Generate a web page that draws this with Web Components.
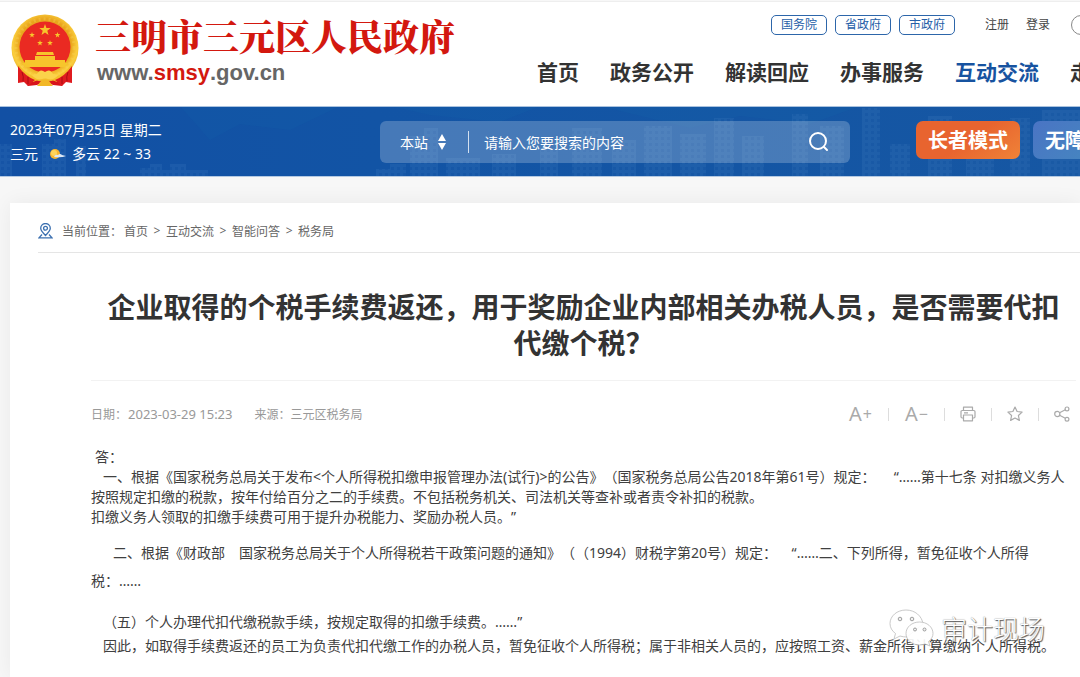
<!DOCTYPE html>
<html lang="zh-CN">
<head>
<meta charset="utf-8">
<meta name="viewport" content="width=device-width, initial-scale=1">
<title>三明市三元区人民政府 - 智能问答</title>
<style>
  body { margin: 0; background: #f7f7f7; color: #333; font-family: "Noto Sans", "Noto Sans CJK SC", sans-serif; font-size: 14px; text-spacing-trim: space-all; overflow-x: hidden; }
</style>
</head>
<body>
<gov-header></gov-header>
<gov-banner></gov-banner>
<content-card>
  <crumb-trail slot="trail"></crumb-trail>
  <qa-article>
    <span slot="title">企业取得的个税手续费返还，用于奖励企业内部相关办税人员，是否需要代扣代缴个税？</span>
    <span slot="date">2023-03-29 15:23</span>
    <span slot="source">三元区税务局</span>
  </qa-article>
</content-card>

<script>
function define(tag, html) {
  const template = document.createElement('template');
  template.innerHTML = html;
  customElements.define(tag, class extends HTMLElement {
    constructor() {
      super();
      this.attachShadow({ mode: 'open' }).append(template.content.cloneNode(true));
    }
  });
}

define('state-emblem', `
<style>:host{display:block;width:70px;height:76px} svg{display:block}</style>
<svg width="70" height="76" viewBox="0 0 70 76" role="img" aria-label="国徽">
  <defs>
    <radialGradient id="g" cx=".5" cy=".45" r=".55"><stop offset=".7" stop-color="#e9a51c"/><stop offset=".88" stop-color="#fbcf3e"/><stop offset="1" stop-color="#eab02a"/></radialGradient>
    <path id="s" d="M0-6 1.4-1.9H5.7L2.3.8 3.5 4.9 0 2.4-3.5 4.9-2.3.8-5.7-1.9H-1.4Z"/>
  </defs>
  <path d="M11 50 8 68l7-1 3 6 9-1 8-4 8 4 9 1 3-6 7 1-3-18Z" fill="#d8121b"/>
  <ellipse cx="35" cy="35" rx="33.5" ry="33.5" fill="url(#g)"/>
  <circle cx="35" cy="35" r="29" fill="none" stroke="#f9dc62" stroke-width="3" stroke-dasharray="2 3" opacity=".3"/>
  <circle cx="35" cy="34" r="25.5" fill="#ea2a22"/>
  <g fill="#f7c52c"><use href="#s" transform="translate(35 17)"/>
    <use href="#s" transform="translate(22 22) scale(.5)"/><use href="#s" transform="translate(47.5 22) scale(.5)"/>
    <use href="#s" transform="translate(30 30) scale(.5)"/><use href="#s" transform="translate(40 30) scale(.5)"/>
    <path d="M27 39h16l1 3H26ZM25 43h20v4h10v3H15v-3h10ZM12 50h46l-3 4H15Z"/></g>
  <path d="M9 52q10 14 26 14t26-14l1 5q-9 9-15 12l-7-3-5 3-5-3-7 3Q17 66 8 57Z" fill="#f5bd2b"/>
  <path d="M8 53q7 10 17 14l-7 6-4-4-6 1ZM62 53q-7 10-17 14l7 6 4-4 6 1Z" fill="#df1b1f"/>
  <path d="M12 59q2 5 1 9M18 64v7M58 59q-2 5-1 9M52 64v7" stroke="#a90c12" fill="none"/>
  <path d="M27 61q3-6 8-2 5-4 8 2l5 1q-5 7-13 3-8 4-13-3Z" fill="#fbd34a"/>
  <path d="M31 68q4-3 8 0l4 5H27Z" fill="#f2b827"/>
</svg>`);

define('gov-header', `
<style>
  :host{display:block;background:#fff;border-top:1px solid #eee;margin-top:1px}
  header{display:flex;height:104px;overflow:hidden}
  .brand{display:flex;flex:none;width:517px;padding:11px 10px 0;gap:15px;color:inherit;text-decoration:none}
  .name{display:block;margin-top:2px;font:900 36px/42px "Noto Serif CJK SC","Noto Sans CJK SC",serif;color:#d3180f;white-space:nowrap}
  .url{display:block;margin-top:4px;padding-left:2px;font:bold 22px/24px "Liberation Sans",sans-serif;color:#666}
  .url b{color:#d3180f}
  .side{flex:1;min-width:0}
  .top{display:flex;justify-content:flex-end;align-items:center;gap:8px;padding-top:13px;margin-right:-11px;font-size:12px;line-height:18px}
  .top a{text-decoration:none;color:#444;white-space:nowrap}
  .top .pill{border:1px solid #2d66aa;border-radius:5px;padding:0 9px;color:#2660a8}
  .top .user{margin-left:9px}
  .top .first{margin-left:22px}
  .top .round{width:20px;height:20px;box-sizing:border-box;border:1px solid #888;border-radius:50%;margin-left:13px}
  nav{display:flex;gap:31px;padding-top:21px;font-size:21px;line-height:32px;font-weight:700;white-space:nowrap}
  nav a{color:#333;text-decoration:none}
  nav a.on{color:#1753a0}
</style>
<header>
  <a class="brand" href="#"><state-emblem></state-emblem><span><span class="name">三明市三元区人民政府</span><span class="url">www.<b>smsy</b>.gov.cn</span></span></a>
  <div class="side">
    <div class="top"><a class="pill" href="#">国务院</a><a class="pill" href="#">省政府</a><a class="pill" href="#">市政府</a><a class="user first" href="#">注册</a><a class="user" href="#">登录</a><a class="round" href="#" aria-label="更多"></a></div>
    <nav><a href="#">首页</a><a href="#">政务公开</a><a href="#">解读回应</a><a href="#">办事服务</a><a class="on" href="#">互动交流</a><a href="#">走进三元</a></nav>
  </div>
</header>`);

define('city-skyline', `
<style>:host{display:block;position:absolute;inset:0;overflow:hidden} svg{display:block;width:100%;height:100%}</style>
<svg viewBox="0 0 1080 70" preserveAspectRatio="xMidYMax slice" aria-hidden="true">
  <defs>
    <pattern id="w" width="6" height="6" patternUnits="userSpaceOnUse"><rect width="6" height="6" fill="#4b86c6"/><path d="M1 1h3v3H1Z" fill="#2a67ae"/></pattern>
    <linearGradient id="h"><stop stop-color="#1250a4"/><stop offset=".35" stop-color="#1254a5"/><stop offset="1" stop-color="#1657a3"/></linearGradient>
  </defs>
  <rect width="1080" height="70" fill="url(#h)"/>
  <path d="M180 0H340L290 24 240 18 210 34ZM390 0H540L500 16 430 9ZM600 0H860L810 18 740 10 690 22Z" fill="#166aac" opacity=".15"/>
  <path d="M0 70V38H12V70M42 70V38h12v-5h12V70M76 70V40h10v30M140 70V62h10v-4h12v6h8v-6h16v6h22v6M376 70v-7h14v-5h16v12M410 70V30h14v-8h14v48M446 70V52h34v18M492 70V48h24v22M540 70V42h18v28M572 70V22h30v48M612 70V34h24v36M644 70V20h28v50M680 70V28h26v42M714 70V12h20v58M742 70V30h22v40M792 70V8h16v62M820 70V20h24v50M862 70V2h18v68M890 70V38h20v32M928 70V10h24v60M966 70V25h28v45M1010 70V12h20v58M1042 70V4h38v66" fill="url(#w)" opacity=".18"/>
</svg>`);

define('site-search', `
<style>
  :host{display:block}
  form{display:flex;align-items:center;height:42px;border-radius:6px;background:rgba(255,255,255,.22);color:#fff;padding:0 20px;box-sizing:border-box}
  select,input,button{font:inherit;color:inherit;background:none;border:0;padding:0;margin:0;outline:0}
  select{appearance:none;width:30px;height:24px}
  .arrows{margin:0 21px 0 7px}
  input{flex:1;min-width:0;height:22px;border-left:1px solid #d3e0f0;padding-left:15px}
  input::placeholder{color:#fff;opacity:1}
  button{width:22px;height:22px} svg{display:block}
</style>
<form>
  <select aria-label="搜索范围"><option>本站</option></select>
  <svg class="arrows" width="10" height="16" viewBox="0 0 10 16" fill="#fff"><path d="M5 0 9 7H1ZM5 16 1 9H9Z"/></svg>
  <input type="text" placeholder="请输入您要搜索的内容" aria-label="搜索内容">
  <button type="button" aria-label="搜索"><svg width="22" height="22" viewBox="0 0 22 22" fill="none" stroke="#fff" stroke-width="2"><circle cx="10" cy="10" r="8"/><path d="m16 16 3 3" stroke-linecap="round"/></svg></button>
</form>`);

define('gov-banner', `
<style>
  :host{display:block;position:relative;border-top:1px solid #a9c2df;border-bottom:1px solid #b3c9e2;overflow:hidden;color:#fff}
  .row{position:relative;display:flex;height:69px;padding-left:10px;white-space:nowrap}
  .info{flex:none;width:370px;padding-top:11px;line-height:24px}
  .info p{margin:0;display:flex;align-items:center}
  .info svg{margin:0 6px 0 10px}
  site-search{flex:1 1 470px;min-width:200px;margin-top:14px}
  .modes{flex:none;display:flex;gap:13px;margin:14px -77px 0 66px}
  button{height:38px;padding:2px 12px 0;border:0;border-radius:7px;color:#fff;font:700 20px/36px "Noto Sans","Noto Sans CJK SC",sans-serif}
  .elder{background:linear-gradient(145deg,#e8642f 50%,#ef8338)}
  .access{background:linear-gradient(135deg,#4a74c4,#4292bd)}
</style>
<city-skyline></city-skyline>
<div class="row">
  <div class="info"><p>2023年07月25日 星期二</p>
  <p>三元<svg width="18" height="14" viewBox="0 0 18 14" aria-label="多云"><circle cx="7" cy="7" r="5" fill="#f9b52d"/><circle cx="6" cy="6" r="3" fill="#ffd45b"/><path d="M6 10q1-3 4-2 2-2 4 0l4 1q-4 2-12 1Z" fill="#dce8f5"/></svg>多云 22 ~ 33</p></div>
  <site-search></site-search>
  <div class="modes"><button class="elder" type="button">长者模式</button><button class="access" type="button">无障碍浏览</button></div>
</div>`);

define('content-card', `
<style>:host{display:block;margin:26px 0 0 10px;background:#fff;padding-left:28px;box-shadow:0 0 20px rgba(0,0,0,.06);min-height:474px}</style>
<slot name="trail"></slot><slot></slot>`);

define('crumb-trail', `
<style>
  :host{display:block;border-bottom:1px solid #e5e5e5;font-size:12px;color:#666}
  nav{display:flex;align-items:center;height:43px;padding-top:6px}
  svg{margin-right:9px}
  .here{margin-right:2px}
  a{color:inherit;text-decoration:none}
  i{font-style:normal;width:18px;text-align:center}
</style>
<nav aria-label="当前位置"><svg width="15" height="16" viewBox="0 0 15 16" fill="none" stroke="#3c70b0" stroke-width="1.3"><path d="M7.5 12.5C4 9 2.7 7.5 2.700 5.300a4.800 4.800 0 0 1 9.600 0C12.300 7.500 11 9 7.500 12.500Z"/><circle cx="7.500" cy="5.300" r="1.900"/><path d="M4 11.500 1 14.800h13l-3-3.300"/></svg><span class="here">当前位置：</span><a href="#">首页</a><i>&gt;</i><a href="#">互动交流</a><i>&gt;</i><a href="#">智能问答</a><i>&gt;</i><a href="#">税务局</a></nav>`);

define('article-tools', `
<style>
  :host{display:flex;align-items:center;gap:15px;color:#aaa}
  button{display:flex;align-items:center;justify-content:center;gap:1px;border:0;background:none;padding:0;color:inherit;font:20px/24px "Noto Sans",sans-serif}
  .t{width:25px} .t span{font-size:16px}
  i{width:1px;height:13px;background:#ddd}
  svg{display:block;fill:none;stroke:#aaa;stroke-width:1.2;stroke-linejoin:round}
</style>
<button class="t" type="button" aria-label="放大字体">A<span>+</span></button><i></i>
<button class="t" type="button" aria-label="缩小字体">A<span>−</span></button><i></i>
<button type="button" aria-label="打印"><svg width="16" height="16" viewBox="0 0 16 16"><path d="M3.500 4.500V1.200h9v3.300M3.500 12H2.200Q1 12 1 10.800V5.700Q1 4.500 2.200 4.500h11.600Q15 4.500 15 5.700v5.100Q15 12 13.800 12h-1.300M3.500 9h9v5.800h-9ZM4 6.800h4"/></svg></button><i></i>
<button type="button" aria-label="收藏"><svg width="16" height="16" viewBox="0 0 16 16"><path d="m8 1 2.100 4.500 5 .6-3.700 3.400 1 4.900L8 12l-4.400 2.400 1-4.900L.9 6.100l5-.6Z"/></svg></button><i></i>
<button type="button" aria-label="分享"><svg width="16" height="16" viewBox="0 0 16 16"><circle cx="3.300" cy="8" r="2.600"/><circle cx="13" cy="2.900" r="1.900"/><circle cx="13" cy="13.200" r="1.900"/><path d="M5.600 6.800 11.300 3.800M5.600 9.200l5.700 3"/></svg></button>`);

define('account-mark', `
<style>
  :host{display:flex;align-items:center;gap:7px;color:#fff;font:300 26px/36px "Noto Sans CJK SC",sans-serif;text-shadow:1px 1px 1px #555,0 0 1px #888;white-space:nowrap;pointer-events:none}
  svg{display:block}
</style>
<svg width="45" height="38" viewBox="0 0 45 38" fill="#fff" fill-opacity=".9" stroke="#bbb" stroke-width=".8" aria-hidden="true">
  <path d="M17 1C8 1 1 7 1 14.500c0 4 2 7.500 5.500 10L5 30l6-3q3 1 7 1l16-13C33 7 26 1 17 1Z"/>
  <path d="M30.500 13C23 13 17 18 17 24.500S23 36 30.500 36q3 0 5.500-1l5 2-1.500-4.500C42.500 30 44 27.500 44 24.500 44 18 38 13 30.500 13Z"/>
  <g fill="#eee" stroke="#888"><circle cx="11" cy="10" r="1.800"/><circle cx="23" cy="10" r="1.800"/><circle cx="26" cy="20.500" r="1.500"/><circle cx="35.500" cy="20.500" r="1.500"/></g>
</svg><span>审计现场</span>`);

define('qa-article', `
<style>
  :host{display:block;position:relative;margin:0 4px 0 53px;padding-top:36px}
  h1{margin:0;padding:0 12px 19px;font-size:28px;line-height:36px;font-weight:700;text-align:center;border-bottom:1px solid #f2f2f2}
  .meta{display:flex;align-items:center;height:66px;padding-right:6px;font-size:12px;color:#999}
  .meta .date{font-size:13px;margin:0 22px 0 1px}
  article-tools{margin-left:auto}
  .body{color:#404040;line-height:20px}
  p{margin:0;text-indent:12px}
  .answer{text-indent:4px}
  .second{margin-top:12px;line-height:28px;text-indent:22px}
  .fifth{margin-top:15px;line-height:24px}
  .last{line-height:24px}
  account-mark{position:absolute;right:31px;bottom:11px}
</style>
<h1><slot name="title"></slot></h1>
<div class="meta"><span>日期：</span><span class="date"><slot name="date"></slot></span><span>来源：</span><slot name="source"></slot><article-tools></article-tools></div>
<div class="body">
  <p class="answer">答：</p>
  <p>一、根据《国家税务总局关于发布&lt;个人所得税扣缴申报管理办法(试行)&gt;的公告》（国家税务总局公告2018年第61号）规定：&nbsp;&nbsp;&nbsp;&nbsp; “……第十七条 对扣缴义务人<br>按照规定扣缴的税款，按年付给百分之二的手续费。不包括税务机关、司法机关等查补或者责令补扣的税款。<br>扣缴义务人领取的扣缴手续费可用于提升办税能力、奖励办税人员。”</p>
  <p class="second">二、根据《财政部　国家税务总局关于个人所得税若干政策问题的通知》（（1994）财税字第20号）规定：&nbsp;&nbsp;&nbsp; “……二、下列所得，暂免征收个人所得<br>税：……</p>
  <p class="fifth">（五）个人办理代扣代缴税款手续，按规定取得的扣缴手续费。……”</p>
  <p class="last">因此，如取得手续费返还的员工为负责代扣代缴工作的办税人员，暂免征收个人所得税；属于非相关人员的，应按照工资、薪金所得计算缴纳个人所得税。</p>
</div>
<account-mark></account-mark>`);
</script>
</body>
</html>
